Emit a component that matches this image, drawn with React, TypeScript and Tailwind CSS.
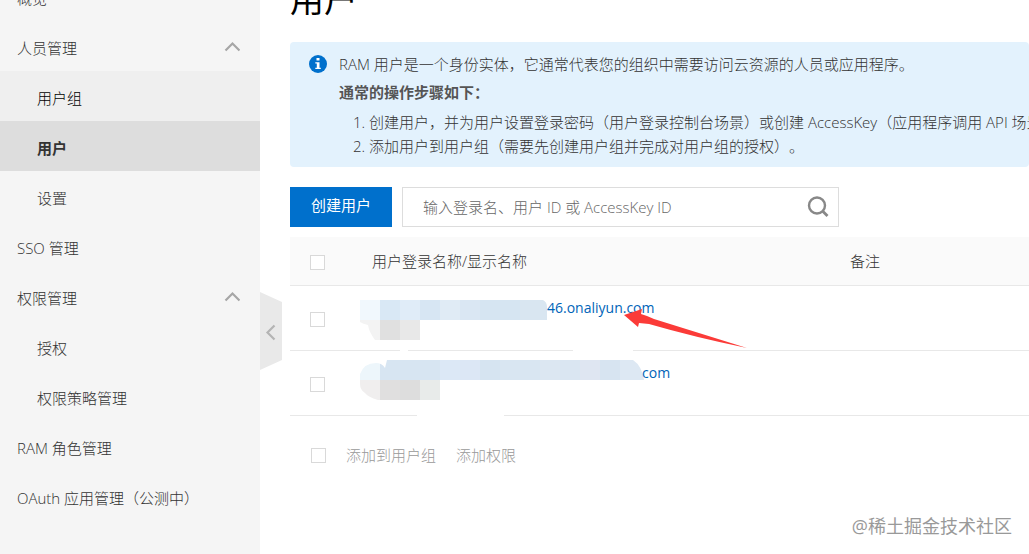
import React from "react";

type NavEntry = { label: string; child?: boolean; open?: boolean; state?: "hover" | "active" };

const nav: NavEntry[] = [
  { label: "概览" },
  { label: "人员管理", open: true },
  { label: "用户组", child: true, state: "hover" },
  { label: "用户", child: true, state: "active" },
  { label: "设置", child: true },
  { label: "SSO 管理" },
  { label: "权限管理", open: true },
  { label: "授权", child: true },
  { label: "权限策略管理", child: true },
  { label: "RAM 角色管理" },
  { label: "OAuth 应用管理（公测中）" },
];

function NavItem({ label, child, open, state }: NavEntry) {
  const tone =
    state === "active"
      ? "bg-[#dddddd] font-bold text-[#333333]"
      : state === "hover"
        ? "bg-[#efefef] text-black"
        : "text-[#333333]";
  return (
    <li>
      <a
        href="#"
        aria-current={state === "active" ? "page" : undefined}
        className={`flex h-[50px] items-center justify-between pt-1 pr-5 whitespace-nowrap ${child ? "pl-[37px]" : "pl-[17px]"} ${tone}`}
      >
        {label}
        {open && (
          <svg className="-mt-1 h-4 w-4" viewBox="0 0 16 16" fill="none" stroke="#a6a6a6" strokeWidth="2.2">
            <path d="M1.5 12.5 8.5 5.5l7 7" />
          </svg>
        )}
      </a>
    </li>
  );
}

function Check({ label }: { label: string }) {
  return (
    <input
      type="checkbox"
      aria-label={label}
      className="block h-[15px] w-[15px] shrink-0 appearance-none border border-[#d9d9d9] bg-white"
    />
  );
}

type Block = [number, number, number, string];

function Blocks({ items }: { items: Block[] }) {
  return (
    <>
      {items.map(([x, y, w, c]) => (
        <rect key={`${x}-${y}`} x={x} y={y} width={w} height="20" fill={c} />
      ))}
    </>
  );
}

const firstMask: Block[] = [
  [0, 0, 20, "#f1f8fd"], [20, 0, 20, "#d9e8f5"], [40, 0, 20, "#e0ecf8"], [60, 0, 20, "#d7e6f3"],
  [80, 0, 20, "#e0ebf5"], [100, 0, 20, "#dae7f3"], [120, 0, 40, "#d6e5f2"], [160, 0, 27, "#d9e6f1"],
  [0, 20, 20, "#f3f3f3"], [20, 20, 20, "#e0e0e0"], [40, 20, 20, "#e8e8e8"],
];

const secondMask: Block[] = [
  [0, 0, 20, "#edf6fb"], [20, 0, 60, "#d7e5f2"], [80, 0, 20, "#dce8f6"], [100, 0, 20, "#dce7f5"],
  [120, 0, 20, "#d6e4f1"], [140, 0, 40, "#d9e6f2"], [180, 0, 20, "#dce7f2"], [200, 0, 20, "#dae6f2"],
  [220, 0, 20, "#dfe6f2"], [240, 0, 20, "#d7e4f1"], [260, 0, 24, "#dde8f3"],
  [0, 20, 20, "#f0eeee"], [20, 20, 20, "#e0dfdf"], [40, 20, 20, "#dddddd"], [60, 20, 20, "#e8ebea"],
];

export default function App() {
  return (
    <div className="relative flex h-screen overflow-hidden bg-white font-['Open_Sans','Noto_Sans_CJK_SC',sans-serif] text-[15px] leading-6 font-light text-[#333333]">
      <aside className="w-[260px] shrink-0 bg-[#f5f5f5]">
        <nav aria-label="RAM">
          <ul className="-mt-[29px]">
            {nav.map((n) => (
              <NavItem key={n.label} {...n} />
            ))}
          </ul>
        </nav>
      </aside>

      <div className="flex w-[30px] shrink-0 items-start">
        <button type="button" aria-label="收起" className="mt-[292px] block h-[78px] w-[22px]">
          <svg viewBox="0 0 22 78" className="block h-full w-full" fill="none">
            <path d="M0 0 22 10V68L0 78Z" fill="#e9e9e9" />
            <path d="M14.5 33.5 7.5 40.5l7 7" stroke="#b4b4b4" strokeWidth="2.2" />
          </svg>
        </button>
      </div>

      <main className="min-w-0 flex-1">
        <h1 className="-mt-[21px] mb-[23px] text-[34px] leading-10 font-normal text-black">用户</h1>

        <section className="flex gap-3 overflow-hidden rounded-sm bg-[#e3f2fd] pt-[10px] pb-[9px] pl-[19px] whitespace-nowrap">
          <svg className="mt-[3px] h-[18px] w-[18px] shrink-0" viewBox="0 0 18 18">
            <circle cx="9" cy="9" r="9" fill="#0070cc" />
            <path d="M7.5 3h3v2.5h-3zM6.3 7.2h4.2v5.6h1.3V14H6.3v-1.2h1.5V8.4H6.3z" fill="#fff" />
          </svg>
          <div>
            <p>RAM 用户是一个身份实体，它通常代表您的组织中需要访问云资源的人员或应用程序。</p>
            <p className="mt-1 font-bold text-[#555555]">通常的操作步骤如下：</p>
            <ol className="mt-[6px] list-decimal pl-[30px] [text-spacing-trim:space-all]">
              <li>创建用户，并为用户设置登录密码（用户登录控制台场景）或创建 AccessKey（应用程序调用 API 场景）。</li>
              <li>添加用户到用户组（需要先创建用户组并完成对用户组的授权）。</li>
            </ol>
          </div>
        </section>

        <div className="mt-5 flex gap-[10px]">
          <button type="button" className="h-10 w-[102px] bg-[#0070cc] pb-1 font-normal text-white">
            创建用户
          </button>
          <form className="flex h-10 w-[437px] items-center border border-[#dddddd] pr-[9px]">
            <input
              type="search"
              aria-label="搜索用户"
              placeholder="输入登录名、用户 ID 或 AccessKey ID"
              className="h-full min-w-0 flex-1 pl-5 outline-none placeholder:text-[#666666]"
            />
            <button type="button" aria-label="搜索">
              <svg className="h-[22px] w-[22px]" viewBox="0 0 22 22" fill="none" stroke="#888888" strokeWidth="2.4">
                <circle cx="10" cy="9.5" r="8" />
                <path d="m15.5 15 5 5" strokeWidth="2.8" />
              </svg>
            </button>
          </form>
        </div>

        <table className="mt-[10px] w-full table-fixed border-separate border-spacing-0 text-left">
          <thead>
            <tr className="h-[49px] bg-[#fafafa]">
              <th className="w-[70px] border-b border-[#e8e8e8] pt-[2px] pl-5">
                <Check label="全选" />
              </th>
              <th className="w-[490px] border-b border-[#e8e8e8] pl-3 font-light">用户登录名称/显示名称</th>
              <th className="border-b border-[#e8e8e8] font-light">备注</th>
            </tr>
          </thead>
          <tbody>
            <tr className="h-[65px]">
              <td className="border-b border-[#e8e8e8] pt-[2px] pl-5">
                <Check label="选择用户 1" />
              </td>
              <td className="border-b border-[#e8e8e8] pt-[10px] align-top">
                <div className="flex items-start">
                  <svg className="mt-1 h-10 w-[187px] shrink-0 overflow-visible" viewBox="0 0 187 40">
                    <defs>
                      <clipPath id="mask-one">
                        <path d="M0 0H183Q187 2 187 7V20H60V40H15Q9 32 8 25Q3 24 0 22Z" />
                      </clipPath>
                    </defs>
                    <g clipPath="url(#mask-one)">
                      <Blocks items={firstMask} />
                    </g>
                    <path d="M40 50h8v2h-8zM213 50h60v2h-60z" fill="#fff" />
                  </svg>
                  <a href="#" className="text-sm leading-6 font-normal text-[#0064b8]">46.onaliyun.com</a>
                </div>
              </td>
              <td className="border-b border-[#e8e8e8]" />
            </tr>
            <tr className="h-[65px]">
              <td className="border-b border-[#e8e8e8] pt-[2px] pl-5">
                <Check label="选择用户 2" />
              </td>
              <td className="border-b border-[#e8e8e8] pt-[10px] align-top">
                <div className="flex items-start">
                  <svg className="-mt-px h-10 w-[282px] shrink-0 overflow-visible" viewBox="0 0 282 40">
                    <defs>
                      <clipPath id="mask-two">
                        <path d="M27 0H273Q282 6 284 20H80V40H18Q8 37 5 33Q0 30 0 24V14Q4 3 16 3Q22 3 25 8L27 0Z" />
                      </clipPath>
                    </defs>
                    <g clipPath="url(#mask-two)">
                      <Blocks items={secondMask} />
                    </g>
                    <path d="M57 54h87v3H57z" fill="#fff" />
                  </svg>
                  <a href="#" className="text-sm leading-6 font-normal text-[#0064b8]">com</a>
                </div>
              </td>
              <td className="border-b border-[#e8e8e8]" />
            </tr>
          </tbody>
        </table>

        <div className="flex items-center gap-5 pt-[27px] pl-[21px] text-[#999999]">
          <Check label="选择全部用户" />
          <button type="button">添加到用户组</button>
          <button type="button">添加权限</button>
        </div>
      </main>

      <svg className="absolute top-[309px] left-[624px] h-10 w-[124px]" viewBox="0 0 124 40">
        <path d="M0 6 18 0 17 5Q24 7 30 10L123 39Q70 28 25 15L15 14 14 18Z" fill="#fb3b38" />
      </svg>
      <p className="absolute right-[17px] bottom-4 text-[18px] font-normal text-[#999999]">@稀土掘金技术社区</p>
    </div>
  );
}
